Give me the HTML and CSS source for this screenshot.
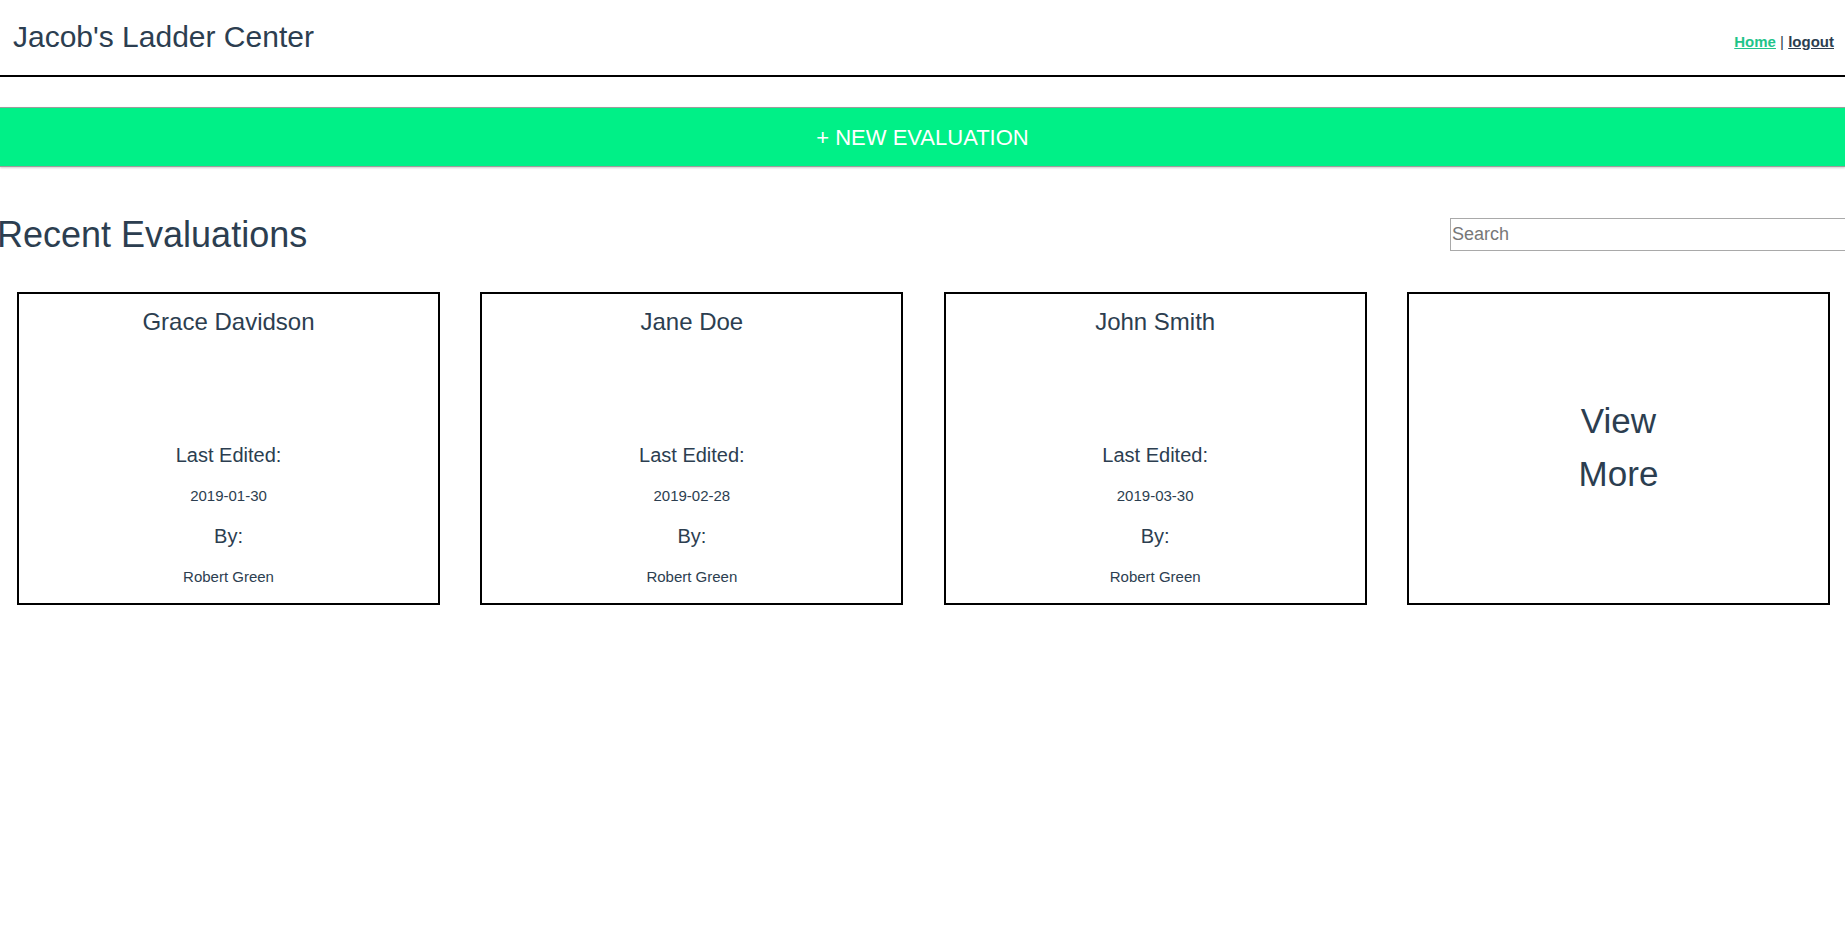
FILE: index.html
```
<!DOCTYPE html>
<html lang="en">
<head>
<meta charset="utf-8">
<title>Jacob's Ladder Center</title>
<link rel="stylesheet" href="styles.css">
</head>
<body>
<div class="app">
  <header class="header">
    <h1 class="brand">Jacob's Ladder Center</h1>
    <nav class="nav">
      <a class="nav-link active" href="#">Home</a> | <a class="nav-link" href="#">logout</a>
    </nav>
  </header>

  <button class="new-eval">+ NEW EVALUATION</button>

  <section class="recent">
    <div class="recent-head">
      <h2 class="recent-title">Recent Evaluations</h2>
      <input class="search" type="text" placeholder="Search">
    </div>

    <div class="cards">
      <div class="card">
        <h3 class="card-name">Grace Davidson</h3>
        <div class="card-details">
          <p class="label">Last Edited:</p>
          <p class="value">2019-01-30</p>
          <p class="label">By:</p>
          <p class="value">Robert Green</p>
        </div>
      </div>
      <div class="card">
        <h3 class="card-name">Jane Doe</h3>
        <div class="card-details">
          <p class="label">Last Edited:</p>
          <p class="value">2019-02-28</p>
          <p class="label">By:</p>
          <p class="value">Robert Green</p>
        </div>
      </div>
      <div class="card">
        <h3 class="card-name">John Smith</h3>
        <div class="card-details">
          <p class="label">Last Edited:</p>
          <p class="value">2019-03-30</p>
          <p class="label">By:</p>
          <p class="value">Robert Green</p>
        </div>
      </div>
      <div class="card card-more">
        <span class="more-text">View More</span>
      </div>
    </div>
  </section>
</div>
</body>
</html>
```

FILE: styles.css
```
html, body {
  margin: 0;
  padding: 0;
}

body {
  font-family: "Liberation Sans", Arial, sans-serif;
  color: #2c3e50;
  background: #fff;
  overflow-x: hidden;
}

.app {
  width: 1845px;
}

.header {
  box-sizing: border-box;
  height: 77px;
  display: flex;
  justify-content: space-between;
  align-items: flex-start;
  padding: 20px 11px 0 13px;
  border-bottom: 2px solid #000;
}

.brand {
  margin: 0;
  font-size: 30px;
  font-weight: normal;
  line-height: normal;
}

.nav {
  padding-top: 13px;
  font-size: 15px;
  line-height: normal;
  color: #2c3e50;
}

.nav-link {
  font-weight: bold;
  color: #2c3e50;
  text-decoration: underline;
}

.nav-link.active {
  color: #1fc48a;
}

.new-eval {
  display: block;
  box-sizing: border-box;
  width: 100%;
  height: 60px;
  margin: 30px 0 0;
  padding: 2px 0 0;
  border: none;
  border-top: 1px solid #9c9c9c;
  border-bottom: 1px solid #9c9c9c;
  box-shadow: 0 1px 2px rgba(0, 0, 0, 0.2);
  background: #00f087;
  color: #fff;
  font-family: "Liberation Sans", Arial, sans-serif;
  font-size: 22px;
  text-align: center;
}

.recent-head {
  display: flex;
  justify-content: space-between;
  align-items: center;
  margin-top: 47px;
}

.recent-title {
  margin: 0 0 0 -3px;
  font-size: 36px;
  font-weight: normal;
  line-height: normal;
}

.search {
  box-sizing: border-box;
  width: 420px;
  height: 33px;
  margin: -2px -25px 0 0;
  padding: 1px 1px 0;
  border: 1px solid #a9a9a9;
  font-family: "Liberation Sans", Arial, sans-serif;
  font-size: 18px;
  color: #2c3e50;
  outline: none;
}

.search::placeholder {
  color: #777;
}

.cards {
  display: grid;
  grid-template-columns: repeat(4, 423px);
  column-gap: 40.33px;
  padding-left: 17px;
  margin-top: 36px;
}

.card {
  box-sizing: border-box;
  height: 313px;
  border: 2px solid #000;
  padding: 14px 0 18px;
  display: flex;
  flex-direction: column;
  justify-content: space-between;
  text-align: center;
}

.card-name {
  margin: 0;
  font-size: 24px;
  font-weight: normal;
  line-height: normal;
}

.card-details {
  display: flex;
  flex-direction: column;
}

.card-details p {
  margin: 0;
  line-height: normal;
}

.label {
  font-size: 20px;
}

.label + .value {
  margin-top: 20px;
}

.value + .label {
  margin-top: 21px;
}

.value {
  font-size: 15px;
}

.card-more {
  justify-content: center;
  align-items: center;
  padding: 0 0 4px;
}

.more-text {
  display: block;
  width: min-content;
  font-size: 35px;
  line-height: 53px;
  text-align: center;
}
```
